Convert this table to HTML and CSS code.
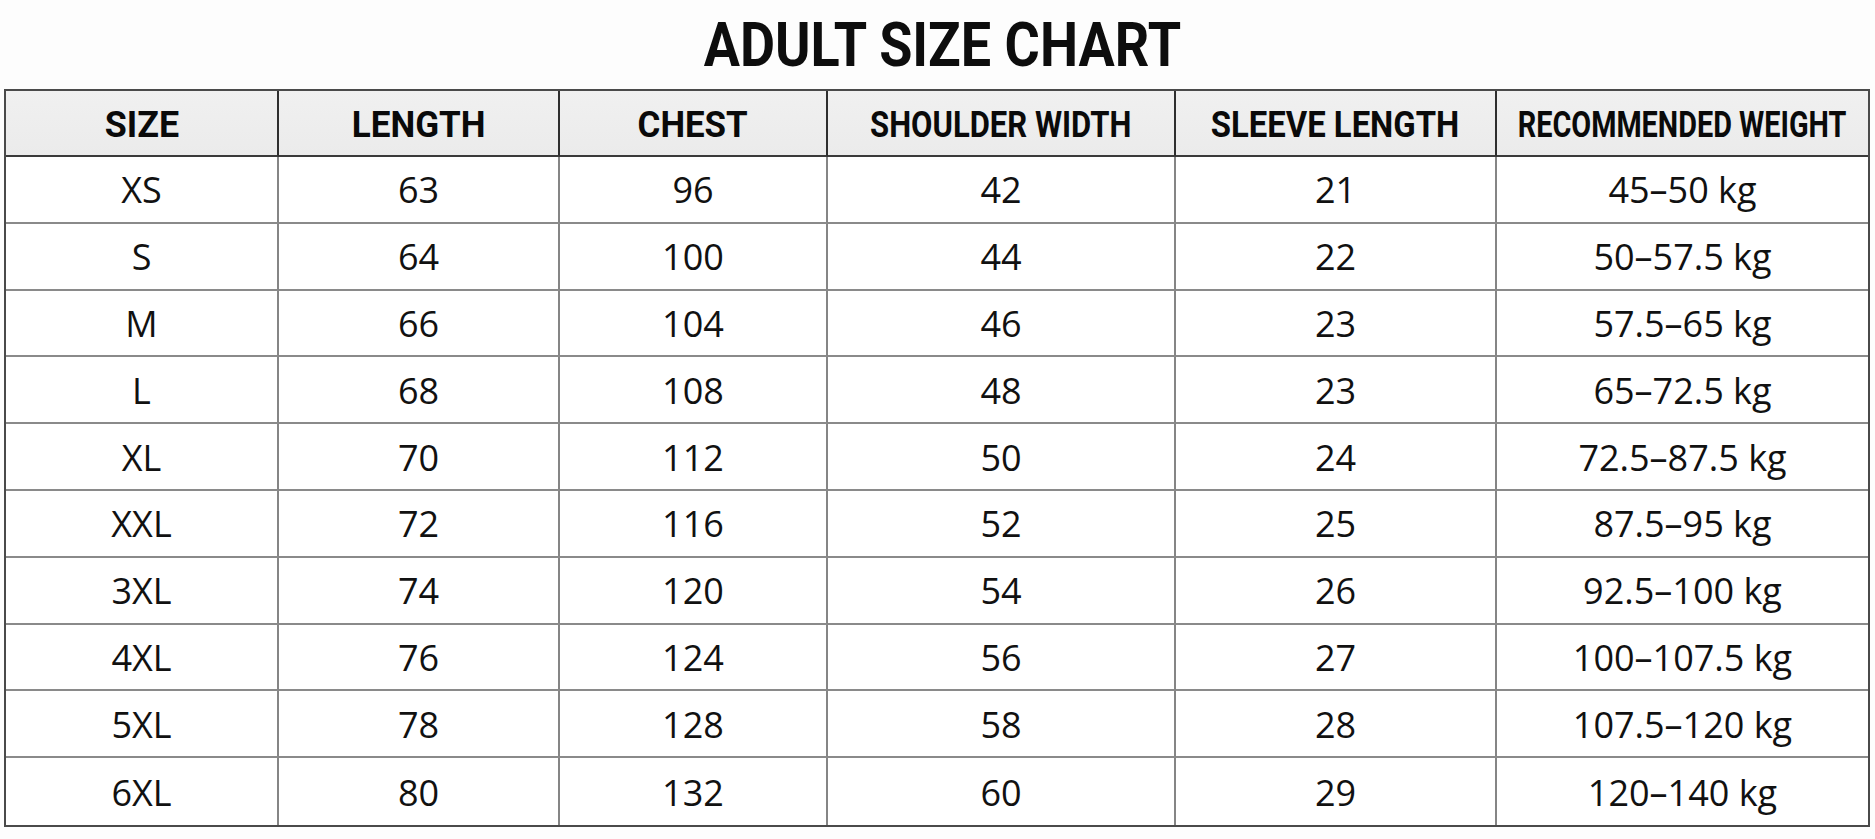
FILE: index.html
```html
<!DOCTYPE html>
<html lang="en">
<head>
<meta charset="utf-8">
<title>Adult Size Chart</title>
<link rel="stylesheet" href="styles.css">
</head>
<body>
<main class="page">
  <h1 class="title"><span class="title-text">ADULT SIZE CHART</span></h1>
  <div class="chart">
    <div class="cell head"><span class="ht s-size">SIZE</span></div>
    <div class="cell head"><span class="ht s-length">LENGTH</span></div>
    <div class="cell head"><span class="ht s-chest">CHEST</span></div>
    <div class="cell head"><span class="ht s-shoulder">SHOULDER WIDTH</span></div>
    <div class="cell head"><span class="ht s-sleeve">SLEEVE LENGTH</span></div>
    <div class="cell head last-col"><span class="ht s-weight">RECOMMENDED WEIGHT</span></div>

    <div class="cell">XS</div><div class="cell">63</div><div class="cell">96</div><div class="cell">42</div><div class="cell">21</div><div class="cell last-col">45–50 kg</div>
    <div class="cell">S</div><div class="cell">64</div><div class="cell">100</div><div class="cell">44</div><div class="cell">22</div><div class="cell last-col">50–57.5 kg</div>
    <div class="cell">M</div><div class="cell">66</div><div class="cell">104</div><div class="cell">46</div><div class="cell">23</div><div class="cell last-col">57.5–65 kg</div>
    <div class="cell">L</div><div class="cell">68</div><div class="cell">108</div><div class="cell">48</div><div class="cell">23</div><div class="cell last-col">65–72.5 kg</div>
    <div class="cell">XL</div><div class="cell">70</div><div class="cell">112</div><div class="cell">50</div><div class="cell">24</div><div class="cell last-col">72.5–87.5 kg</div>
    <div class="cell">XXL</div><div class="cell">72</div><div class="cell">116</div><div class="cell">52</div><div class="cell">25</div><div class="cell last-col">87.5–95 kg</div>
    <div class="cell">3XL</div><div class="cell">74</div><div class="cell">120</div><div class="cell">54</div><div class="cell">26</div><div class="cell last-col">92.5–100 kg</div>
    <div class="cell">4XL</div><div class="cell">76</div><div class="cell">124</div><div class="cell">56</div><div class="cell">27</div><div class="cell last-col">100–107.5 kg</div>
    <div class="cell">5XL</div><div class="cell">78</div><div class="cell">128</div><div class="cell">58</div><div class="cell">28</div><div class="cell last-col">107.5–120 kg</div>
    <div class="cell last-row">6XL</div><div class="cell last-row">80</div><div class="cell last-row">132</div><div class="cell last-row">60</div><div class="cell last-row">29</div><div class="cell last-row last-col">120–140 kg</div>
  </div>
</main>
</body>
</html>
```

FILE: styles.css
```css
* { box-sizing: border-box; }

html, body {
  margin: 0;
  padding: 0;
  background: #fdfdfd;
}

.page {
  width: 1875px;
  height: 839px;
  padding-left: 4px;
}

.title {
  margin: 0;
  height: 89px;
  display: flex;
  align-items: center;
  justify-content: center;
  padding-left: 6px;
  padding-top: 1px;
  font-family: Roboto, "Liberation Sans", sans-serif;
  font-weight: 700;
  font-size: 62px;
  line-height: 1;
  color: #0d0d0d;
}

.title-text {
  display: inline-block;
  transform: scaleX(0.87);
}

.chart {
  width: 1866px;
  display: grid;
  grid-template-columns: 273px 281px 268px 348px 321px 371px;
  grid-template-rows: 66px repeat(10, 66.8px);
  border: 2px solid #4a4a4a;
  background: #ffffff;
}

.cell {
  display: flex;
  align-items: center;
  justify-content: center;
  border-right: 2px solid #858585;
  border-bottom: 2px solid #8a8a8a;
  font-family: "Open Sans", "Noto Sans", sans-serif;
  font-weight: 400;
  font-size: 36px;
  color: #111;
  white-space: nowrap;
  padding-top: 1px;
}

.cell.head {
  background: linear-gradient(#f0f0f0, #ebebeb);
  border-right-color: #2e2e2e;
  border-bottom-color: #3a3a3a;
  font-family: Roboto, "Liberation Sans", sans-serif;
  font-weight: 700;
  font-size: 36.5px;
  color: #0a0a0a;
  padding-top: 2px;
}

.cell.last-col { border-right: none; }
.cell.last-row { border-bottom: none; }

.ht { display: inline-block; white-space: nowrap; }
.s-size { transform: scaleX(0.98); }
.s-length { transform: scaleX(0.96); }
.s-chest { transform: scaleX(0.955); }
.s-shoulder { transform: scaleX(0.85); }
.s-sleeve { transform: scaleX(0.9); }
.s-weight { transform: scaleX(0.79); }
```
